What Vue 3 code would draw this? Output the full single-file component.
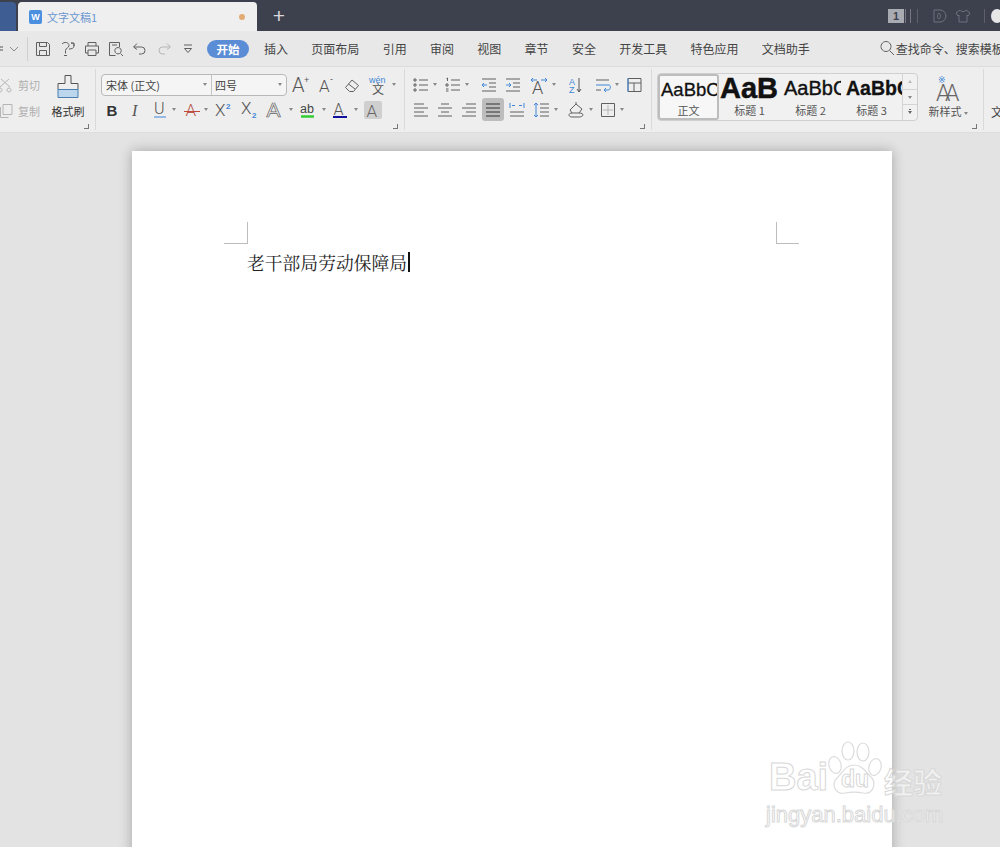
<script setup>
import { h } from 'vue'

const D = '#555'
const B = '#3f87d6'
const L = '#b5b5b5'
const t = (x, y, size, str, o = {}) => ({ text: str, x, y, size, ...o })
const thin = { family: 'Roboto, "Liberation Sans", sans-serif', weight: 300 }

const ICONS = {
  save: ['M2.500 2.500h11l2 2v11h-13z', 'M5.500 2.500v4h7v-4', 'M5.500 15.500v-5h7v5'],
  revise: ['M3 4c2-2.500 7-2 7 1.500 0 2.500-3.500 2.500-3.500 5v3', 'M5 15.500h3', 'M12 3h3v3', 'M10 9c3 0 5-1 5-3s-1-3-3-3'],
  print: ['M5 6V2.500h8V6', 'M5 13H2.500V6h13v7H13', 'M5 10h8v5.500H5z'],
  preview: ['M12.500 7V2.500h-10v13h6', 'M5 5h5', { c: 'M11 7.500a3.200 3.200 0 1 0 .01 0z' }, 'M13.500 13.500l2.500 2.500'],
  undo: ['M6 3.500 2.500 7 6 9.500', 'M3 7h7.500a3.500 3.500 0 0 1 0 7H8'],
  redo: [{ d: 'M12 3.500 15.500 7 12 9.500', s: L }, { d: 'M15 7H7.500a3.500 3.500 0 0 0 0 7H10', s: L }],
  more: ['M5 5h8', 'M5.500 8.500h7L9 12.500z'],
  chev: [{ d: 'M4 7l4 4 4-4', s: '#888' }],
  plusA: [t(1, 16, 20, 'A', thin), t(13, 7, 9, '+')],
  minusA: [t(2, 16, 17, 'A', thin), t(13, 6, 9, '-')],
  eraser: ['M2.500 11.500 9 4l6.500 5.500-5 6H6.500z', 'M5.500 8 12 13'],
  wen: [t(0, 7, 9, 'wén', { fill: B }), t(3, 17.500, 12, '文', { family: '"Noto Sans CJK SC"' })],
  bold: [t(3.500, 15, 15, 'B', { weight: 'bold', fill: '#333' })],
  italic: [t(5, 15, 16, 'I', { style: 'italic', family: '"Liberation Serif"' })],
  under: [t(3, 13, 16, 'U', thin), { d: 'M3 16h12', s: B }],
  strikeA: [t(2.500, 15, 17, 'A', { ...thin, fill: '#b8574c' }), { d: 'M1 10.500h16', s: '#c0483c' }],
  sup: [t(1, 15, 17, 'X', thin), t(12, 8, 8, '2', { fill: B, weight: 'bold' })],
  sub: [t(1, 13, 17, 'X', thin), t(12, 17, 8, '2', { fill: B, weight: 'bold' })],
  outA: [t(0.500, 16, 21, 'A', { fill: '#f0f0f0', stroke: '#666', sw: 0.7 })],
  ab: [t(1, 12, 12.500, 'ab', { fill: '#444' }), { d: 'M2 15.500h13', s: '#33cc33', w: 2.500 }],
  blueA: [t(2.500, 14, 16, 'A', thin), { d: 'M2 16h14', s: '#10109a', w: 2 }],
  grayA: [{ box: true }, t(2.500, 15.500, 17, 'A', { ...thin, fill: '#666' })],
  list: ['M7 4h9', 'M7 9h9', 'M7 14h9', 'M2 3h2v2H2z', 'M2 8h2v2H2z', 'M2 13h2v2H2z'],
  num: ['M7 4h9', 'M7 9h9', 'M7 14h9', 'M2.500 2.500l1-.5v3', 'M2 8h2v2H2z', 'M2 13h2.500M2 15h2.500'],
  indL: ['M2 3h14', 'M2 15h14', 'M9 7h7', 'M9 11h7', { d: 'M7 9H2M4 7 2 9l2 2', s: B }],
  indR: ['M2 3h14', 'M2 15h14', 'M9 7h7', 'M9 11h7', { d: 'M2 9h5M5 7l2 2-2 2', s: B }],
  dirA: [t(2, 17.500, 18, 'A', thin), { d: 'M1 4h6M3 2 1 4l2 2M11 4h6M15 2l2 2-2 2', s: B }],
  sort: [t(3, 8.500, 9, 'A', { fill: B }), t(3, 17, 9, 'Z', { fill: B }), { d: 'M13 2v14', s: '#555' }, { d: 'M11 13l2 3 2-3', s: '#555' }],
  wrap: ['M2 4h13', 'M2 14h5', { d: 'M2 9h13c2 0 2 5-1 5h-3M12 12l-2 2 2 2', s: B }],
  table: ['M3 2.500h13v13H3z', 'M3 7h13', 'M9 7v8.500', { d: 'M3 2.500v13', s: B }],
  alL: ['M2 3h10', 'M2 7h14', 'M2 11h10', 'M2 15h14'],
  alC: ['M5 3h8', 'M2 7h14', 'M5 11h8', 'M2 15h14'],
  alR: ['M6 3h10', 'M2 7h14', 'M6 11h10', 'M2 15h14'],
  alJ: [{ d: 'M2 3h14M2 7h14M2 11h14M2 15h14', s: '#333' }],
  dist: ['M2 11h14', 'M2 15h14', { d: 'M2 2v5M16 2v5M4 4.500h3M14 4.500h-3', s: B }],
  spacing: ['M8 3h9', 'M8 7h9', 'M8 11h9', 'M8 15h9', { d: 'M4 2v14M2 4l2-2 2 2M2 14l2 2 2-2', s: B }],
  fill: ['M3 9 9 3l6 5-3 4H5z', 'M9 3V1', 'M12 12c3 0 4 1 4 2s-2 2-4 2H5c-2 0-3-1-3-2s1-2 3-2'],
  border: ['M2.500 2.500h13v13h-13z', { d: 'M9 4v10M4 9h10', s: L }],
  cut: [{ d: 'M4 3l9 8M12 3l-9 8', s: L }, { d: 'M3 12a2 2 0 1 0 .01 0zM12 12a2 2 0 1 0 .01 0z', s: L }],
  copy: [{ d: 'M6 2.500h9v10H6z', s: L }, { d: 'M3.500 5v10.500h8', s: L }],
  search: ['M11 6.500a5 5 0 1 0 0 .01z', 'M9.500 10.500l4.500 4.500']
}

const Ico = (props) => {
  const list = ICONS[props.name] || []
  const kids = list.map((e) => {
    if (typeof e === 'string') return h('path', { d: e })
    if (e.box) return h('rect', { x: 0, y: 0, width: 18, height: 18, rx: 2, fill: '#cfcfcf', stroke: 'none' })
    if (e.c) return h('path', { d: e.c })
    if (e.d) return h('path', { d: e.d, stroke: e.s, 'stroke-width': e.w || 1 })
    return h('text', {
      x: e.x, y: e.y, 'font-size': e.size, fill: e.fill || D, stroke: e.stroke || 'none',
      'stroke-width': e.sw || 0, 'font-weight': e.weight || 'normal', 'font-style': e.style || 'normal',
      'font-family': e.family || '"Liberation Sans", sans-serif'
    }, e.text)
  })
  return h('svg', { width: 18, height: 18, viewBox: '0 0 18 18', fill: 'none', stroke: '#606060', 'stroke-width': 1, overflow: 'visible' }, kids)
}

const c = (i, w) => ({ i, w })
const sp = (w) => ({ w })
const car = () => ({ caret: true, w: 6 })

const quick = [c('save', 24), sp(1), c('revise', 24), c('print', 24), c('preview', 24), c('undo', 24), c('redo', 23), sp(1), c('more', 24)]
const tabs = ['插入', '页面布局', '引用', '审阅', '视图', '章节', '安全', '开发工具', '特色应用', '文档助手']

const font1 = [c('plusA', 26), c('minusA', 26), c('eraser', 26), c('wen', 26), car()]
const font2 = [c('bold', 22), c('italic', 26), c('under', 22), car(), sp(3), c('strikeA', 23), car(), c('sup', 28), c('sub', 24), c('outA', 27), car(), c('ab', 27), car(), c('blueA', 26), car(), c('grayA', 28)]
const para1 = [c('list', 22), car(), sp(4), c('num', 22), car(), sp(7), c('indL', 24), c('indR', 24), sp(2), c('dirA', 24), car(), sp(7), c('sort', 22), sp(6), c('wrap', 22), car(), sp(2), c('table', 24)]
const para2 = [c('alL', 22), sp(1), c('alC', 24), c('alR', 24), sp(1), { i: 'alJ', w: 22, on: true }, sp(1), c('dist', 24), c('spacing', 24), car(), sp(5), c('fill', 24), car(), sp(3), c('border', 22), car()]

const styles = [
  { s: 'AaBbC', l: '正文', k: 'normal', on: true },
  { s: 'AaB', l: '标题 1', k: 'h1' },
  { s: 'AaBbC', l: '标题 2', k: 'h2' },
  { s: 'AaBbC', l: '标题 3', k: 'h3' }
]
</script>

<template>
  <div class="app">
    <header class="titlebar">
      <div class="home-tab"></div>
      <div class="doc-tab">
        <span class="w-logo">W</span>
        <span class="doc-name">文字文稿1</span>
        <span class="dot"></span>
      </div>
      <span class="plus">+</span>
      <div class="tray">
        <span class="count">1</span>
        <span class="bars"></span>
        <span class="tray-sep"></span>
        <svg class="tray-ico" width="18" height="18" viewBox="0 0 18 18" fill="none" stroke="#6f7380"><path d="M4 3h6a5 5 0 0 1 0 12H4z"/><path d="M9 6c2 2 2 4 0 6-2-1-2-4 0-6z"/></svg>
        <svg class="tray-ico" width="18" height="18" viewBox="0 0 18 18" fill="none" stroke="#6f7380"><path d="M6 3 2 6l2 3 1-1v7h8V8l1 1 2-3-4-3c-1 2-5 2-6 0z"/></svg>
        <span class="tray-sep second"></span>
        <span class="avatar"></span>
      </div>
    </header>

    <nav class="menubar">
      <svg class="hamb" width="8" height="18" viewBox="0 0 8 18" fill="none" stroke="#555"><path d="M0 7h3M0 10h3"/></svg>
      <span class="chev"><Ico name="chev" /></span>
      <span class="vsep"></span>
      <div class="cells quick">
        <span v-for="(q, n) in quick" :key="n" class="cell" :style="{ width: q.w + 'px' }"><Ico v-if="q.i" :name="q.i" /></span>
      </div>
      <span class="pill">开始</span>
      <div class="tabs">
        <span v-for="tab in tabs" :key="tab">{{ tab }}</span>
      </div>
      <div class="find"><Ico name="search" /><span>查找命令、搜索模板</span></div>
    </nav>

    <section class="ribbon">
      <div class="group g-clip">
        <div class="clip-col">
          <div class="clip-row"><Ico name="cut" /><span>剪切</span></div>
          <div class="clip-row"><Ico name="copy" /><span>复制</span></div>
        </div>
        <div class="brush">
          <svg width="26" height="28" viewBox="0 0 26 28" fill="none" stroke="#555">
            <path d="M10 2.500h6v8h7v6H3v-6h7z"/>
            <path d="M3 16.500h20v8H3z" fill="#bcd6ee" stroke="#4a7fb0"/>
          </svg>
          <span>格式刷</span>
        </div>
        <i class="launch"></i>
      </div>

      <div class="group g-font">
        <div class="cells row">
          <div class="combo">
            <span class="combo-a">宋体 (正文)<i class="caret"></i></span>
            <span class="combo-b">四号<i class="caret"></i></span>
          </div>
          <template v-for="(q, n) in font1" :key="n">
            <span class="cell" :style="{ width: q.w + 'px' }"><i v-if="q.caret" class="caret"></i><Ico v-else-if="q.i" :name="q.i" /></span>
          </template>
        </div>
        <div class="cells row">
          <template v-for="(q, n) in font2" :key="n">
            <span class="cell" :style="{ width: q.w + 'px' }"><i v-if="q.caret" class="caret"></i><Ico v-else-if="q.i" :name="q.i" /></span>
          </template>
        </div>
        <i class="launch"></i>
      </div>

      <div class="group g-para">
        <div class="cells row">
          <template v-for="(q, n) in para1" :key="n">
            <span class="cell" :style="{ width: q.w + 'px' }"><i v-if="q.caret" class="caret"></i><Ico v-else-if="q.i" :name="q.i" /></span>
          </template>
        </div>
        <div class="cells row">
          <template v-for="(q, n) in para2" :key="n">
            <span class="cell" :class="{ on: q.on }" :style="{ width: q.w + 'px' }"><i v-if="q.caret" class="caret"></i><Ico v-else-if="q.i" :name="q.i" /></span>
          </template>
        </div>
        <i class="launch"></i>
      </div>

      <div class="group g-style">
        <div class="style-box">
          <div v-for="st in styles" :key="st.k" class="style-item" :class="[st.k, { on: st.on }]">
            <span class="sample">{{ st.s }}</span>
            <span class="label">{{ st.l }}</span>
          </div>
          <div class="scroller">
            <span><i class="caret up"></i></span>
            <span><i class="caret"></i></span>
            <span><i class="caret eq"></i></span>
          </div>
        </div>
        <div class="newstyle">
          <svg width="28" height="30" viewBox="0 0 28 30">
            <text x="4" y="10" font-size="9" fill="#3f87d6" font-family="'DejaVu Sans', sans-serif">※</text>
            <text x="2" y="28" font-size="23" fill="#666" font-weight="300" font-family="Roboto, sans-serif">A</text>
            <text x="11" y="28" font-size="23" fill="#666" font-weight="300" font-family="Roboto, sans-serif">A</text>
          </svg>
          <span>新样式<i class="caret small"></i></span>
        </div>
        <i class="launch"></i>
      </div>

      <div class="group g-last"><span>文</span></div>
    </section>

    <main class="canvas">
      <article class="page">
        <div class="marks"><i class="mark left"></i><i class="mark right"></i></div>
        <p class="line">老干部局劳动保障局<i class="cursor"></i></p>
      </article>
    </main>

    <div class="wm">
      <div class="wm-top">
        <span class="wm-bai">Bai</span>
        <div class="wm-paw">
          <svg width="58" height="62" viewBox="0 0 58 62" fill="rgba(255,255,255,.45)" stroke="#dcdcdc" stroke-width="1.200">
            <ellipse cx="9" cy="28" rx="6" ry="8.500" transform="rotate(-15 9 28)"/>
            <ellipse cx="22" cy="14" rx="6" ry="9"/>
            <ellipse cx="37" cy="15" rx="6" ry="9"/>
            <ellipse cx="49" cy="30" rx="6" ry="8.500" transform="rotate(15 49 30)"/>
            <path d="M28 28c9 0 12 8 17 12 6 6 2 18-8 16-5-1-13-1-18 0-10 2-14-9-8-15 5-4 8-13 17-13z"/>
          </svg>
          <span class="wm-du">du</span>
        </div>
        <span class="wm-cn">经验</span>
      </div>
      <div class="wm-url">jingyan.baidu.com</div>
    </div>
  </div>
</template>

<style scoped>
.app {
  position: relative;
  width: 1000px;
  height: 847px;
  overflow: hidden;
  display: flex;
  flex-direction: column;
  background: #e3e3e3;
  font-family: "Noto Sans CJK SC", "Liberation Sans", sans-serif;
  color: #444;
  font-size: 11px;
}
.titlebar {
  flex: none;
  height: 31px;
  display: flex;
  align-items: flex-end;
  background: #3d414e;
}
.home-tab {
  width: 16px;
  height: 29px;
  background: #3e5d92;
  border-radius: 0 4px 0 0;
}
.doc-tab {
  width: 239px;
  height: 29px;
  margin-left: 2px;
  display: flex;
  align-items: center;
  padding: 0 12px 0 11px;
  box-sizing: border-box;
  background: #efefef;
  border-radius: 4px 4px 0 0;
}
.w-logo {
  width: 13px;
  height: 14px;
  flex: none;
  border-radius: 2px;
  background: #4b8fe0;
  color: #fff;
  font: 700 9px/14px "Liberation Sans", sans-serif;
  text-align: center;
}
.doc-name {
  margin-left: 5px;
  color: #6a96cf;
  font-size: 11px;
  white-space: nowrap;
}
.dot {
  width: 6px;
  height: 6px;
  border-radius: 50%;
  background: #e2ab73;
  margin-left: auto;
}
.plus {
  width: 44px;
  height: 29px;
  text-align: center;
  color: #d8d8dc;
  font: 400 21px/28px "Liberation Sans", sans-serif;
}
.tray {
  margin-left: auto;
  height: 31px;
  display: flex;
  align-items: center;
}
.count {
  width: 16px;
  height: 14px;
  background: #a9abb2;
  color: #3d414e;
  text-align: center;
  font: 700 11px/14px "Liberation Sans", sans-serif;
}
.bars {
  width: 4px;
  height: 14px;
  margin-left: 1px;
  border-left: 1px solid #777a85;
  border-right: 1px solid #777a85;
}
.tray-sep {
  width: 1px;
  height: 14px;
  background: #5d606c;
  margin: 0 12px 0 6px;
}
.tray-sep.second {
  margin: 0 6px 0 6px;
}
.tray-ico {
  margin-right: 6px;
}
.avatar {
  width: 12px;
  height: 14px;
  border-radius: 50%;
  background: #e6e6e6;
  margin-right: -3px;
}
.menubar {
  flex: none;
  height: 36px;
  display: flex;
  align-items: center;
  background: #e8e8e8;
  border-bottom: 1px solid #dcdcdc;
  white-space: nowrap;
  overflow: hidden;
  box-sizing: border-box;
}
.hamb {
  flex: none;
}
.chev {
  margin-left: -1px;
  margin-right: 2px;
  width: 16px;
  display: flex;
  justify-content: center;
}
.vsep {
  width: 1px;
  height: 24px;
  margin-left: 2px;
  background: #cfcfcf;
  flex: none;
}
.cells {
  display: flex;
  align-items: center;
}
.quick {
  margin-left: 3px;
}
.cell {
  flex: none;
  height: 23px;
  display: flex;
  align-items: center;
  justify-content: center;
}
.cell.on {
  background: #bdbdbd;
  border-radius: 3px;
}
.pill {
  flex: none;
  width: 42px;
  height: 18px;
  margin-left: 7px;
  border-radius: 9px;
  background: #5b8dd6;
  color: #fff;
  font-size: 11.500px;
  font-weight: 700;
  line-height: 18px;
  text-align: center;
}
.tabs {
  display: flex;
  gap: 23.300px;
  margin-left: 15px;
  font-size: 12px;
  color: #444;
}
.find {
  display: flex;
  align-items: center;
  margin-left: 70px;
  font-size: 12px;
  flex: none;
}
.find span {
  margin-left: -2px;
}
.ribbon {
  flex: none;
  height: 66px;
  display: flex;
  background: #eeeeee;
  border-bottom: 1px solid #dedede;
  box-sizing: border-box;
  overflow: hidden;
}
.group {
  position: relative;
  flex: none;
  box-sizing: border-box;
  height: 61px;
  margin-top: 2px;
  padding-top: 4px;
  border-right: 1px solid #dadada;
}
.launch {
  position: absolute;
  right: 6px;
  bottom: 1px;
  width: 4px;
  height: 4px;
  border-right: 1px solid #777;
  border-bottom: 1px solid #777;
}
.g-clip {
  width: 96px;
  display: flex;
}
.clip-col {
  width: 45px;
  margin-left: -3px;
  display: flex;
  flex-direction: column;
  gap: 6px;
  padding-top: 2px;
}
.clip-row {
  height: 20px;
  display: flex;
  align-items: center;
  gap: 3px;
  color: #b0b0b0;
  font-size: 11px;
}
.brush {
  width: 40px;
  margin-left: 6px;
  display: flex;
  flex-direction: column;
  align-items: center;
  gap: 2px;
  font-size: 11px;
  color: #333;
  white-space: nowrap;
  line-height: 16px;
}
.g-font {
  width: 309px;
  padding-left: 5px;
}
.row {
  height: 23px;
  margin-bottom: 2px;
}
.combo {
  width: 186px;
  height: 22px;
  display: flex;
  flex: none;
  box-sizing: border-box;
  background: #f5f5f5;
  border: 1px solid #b9b9b9;
  border-radius: 4px;
  font-size: 11px;
  line-height: 20px;
}
.combo-a,
.combo-b {
  display: flex;
  align-items: center;
  justify-content: space-between;
  padding: 0 4px;
  box-sizing: border-box;
}
.combo-a {
  width: 110px;
  border-right: 1px solid #c4c4c4;
}
.combo-b {
  flex: 1;
  padding-left: 3px;
}
.caret {
  display: inline-block;
  width: 0;
  height: 0;
  border-left: 2.500px solid transparent;
  border-right: 2.500px solid transparent;
  border-top: 3px solid #888;
}
.caret.up {
  border-top: 0;
  border-bottom: 3px solid #bbb;
}
.caret.eq {
  border-top-color: #666;
  box-shadow: 0 -3px 0 -1px #666;
}
.caret.small {
  margin-left: 2px;
  vertical-align: middle;
}
.g-para {
  width: 247px;
  padding-left: 5px;
}
.g-style {
  width: 332px;
  display: flex;
  padding-left: 5px;
}
.style-box {
  width: 261px;
  height: 48px;
  display: flex;
  box-sizing: border-box;
  border: 1px solid #cfcfcf;
  border-radius: 4px;
  background: #f1f1f1;
}
.style-item {
  width: 61px;
  flex: none;
  box-sizing: border-box;
  overflow: hidden;
  display: flex;
  flex-direction: column;
  font-family: "Liberation Sans", sans-serif;
  white-space: nowrap;
}
.style-item.on {
  background: #f7f7f7;
  border: 2px solid #bdbdbd;
  border-radius: 3px;
}
.sample {
  height: 29px;
  line-height: 29px;
  padding-left: 4px;
  color: #111;
  font-size: 18.500px;
  -webkit-text-stroke: 0.300px #111;
}
.style-item.on .sample {
  height: 27px;
  line-height: 27px;
  padding-left: 1px;
}
.h1 .sample {
  padding-left: 1px;
  font-size: 29px;
  font-weight: 700;
  -webkit-text-stroke: 0.500px #111;
}
.h2 .sample {
  font-size: 20px;
  -webkit-text-stroke: 0.400px #111;
}
.h3 .sample {
  font-size: 19.500px;
  font-weight: 700;
  padding-left: 5px;
}
.label {
  font-family: "Noto Sans CJK SC", sans-serif;
  font-size: 11px;
  line-height: 15px;
  color: #555;
  text-align: center;
}
.scroller {
  flex: 1;
  display: flex;
  flex-direction: column;
  border-left: 1px solid #d4d4d4;
}
.scroller span {
  flex: 1;
  display: flex;
  align-items: center;
  justify-content: center;
  border-bottom: 1px solid #d4d4d4;
}
.scroller span:last-child {
  border-bottom: 0;
}
.newstyle {
  width: 60px;
  display: flex;
  flex-direction: column;
  align-items: center;
  font-size: 11px;
  line-height: 16px;
  color: #555;
  white-space: nowrap;
}
.g-last {
  padding-left: 7px;
  border: 0;
  font-size: 12px;
  line-height: 18px;
  padding-top: 34px;
}
.canvas {
  flex: 1;
  padding: 18px 0 0 132px;
  min-height: 0;
}
.page {
  width: 760px;
  height: 800px;
  box-sizing: border-box;
  padding-top: 71px;
  background: #fff;
  box-shadow: 0 0 12px rgba(0, 0, 0, 0.28);
}
.marks {
  width: 575px;
  height: 22px;
  margin-left: 92px;
  display: flex;
  justify-content: space-between;
}
.mark {
  width: 23px;
  height: 22px;
  box-sizing: border-box;
  border-bottom: 1px solid #bdbdbd;
}
.mark.left {
  width: 24px;
  border-right: 1px solid #bdbdbd;
}
.mark.right {
  border-left: 1px solid #bdbdbd;
}
.line {
  margin: 0 0 0 115px;
  display: flex;
  align-items: center;
  height: 36px;
  font-family: "Noto Serif CJK SC", "Noto Sans CJK SC", serif;
  font-size: 17.800px;
  color: #222;
  font-weight: 400;
}
.cursor {
  width: 2px;
  height: 20px;
  margin-left: 1px;
  background: #111;
}
.wm {
  position: absolute;
  left: 766px;
  top: 739px;
  width: 182px;
  pointer-events: none;
}
.wm-top {
  display: flex;
  align-items: flex-end;
  height: 60px;
}
.wm-bai,
.wm-cn,
.wm-url,
.wm-du {
  color: rgba(255, 255, 255, 0.55);
  -webkit-text-stroke: 1px #d8d8d8;
}
.wm-bai {
  font: 700 38px/37px "Liberation Sans", sans-serif;
  width: 60px;
  padding-left: 3px;
  margin-bottom: 3px;
  box-sizing: border-box;
  flex: none;
}
.wm-paw {
  position: relative;
  width: 58px;
  height: 62px;
  flex: none;
}
.wm-du {
  position: absolute;
  left: 12px;
  top: 30px;
  width: 34px;
  text-align: center;
  font: 700 23px/24px "Liberation Sans", sans-serif;
}
.wm-cn {
  font: 700 29px/32px "Noto Sans CJK SC", sans-serif;
  margin-bottom: 2px;
  white-space: nowrap;
}
.wm-url {
  margin-top: 5px;
  font: 400 22px/22px "Liberation Sans", sans-serif;
  white-space: nowrap;
}
</style>
